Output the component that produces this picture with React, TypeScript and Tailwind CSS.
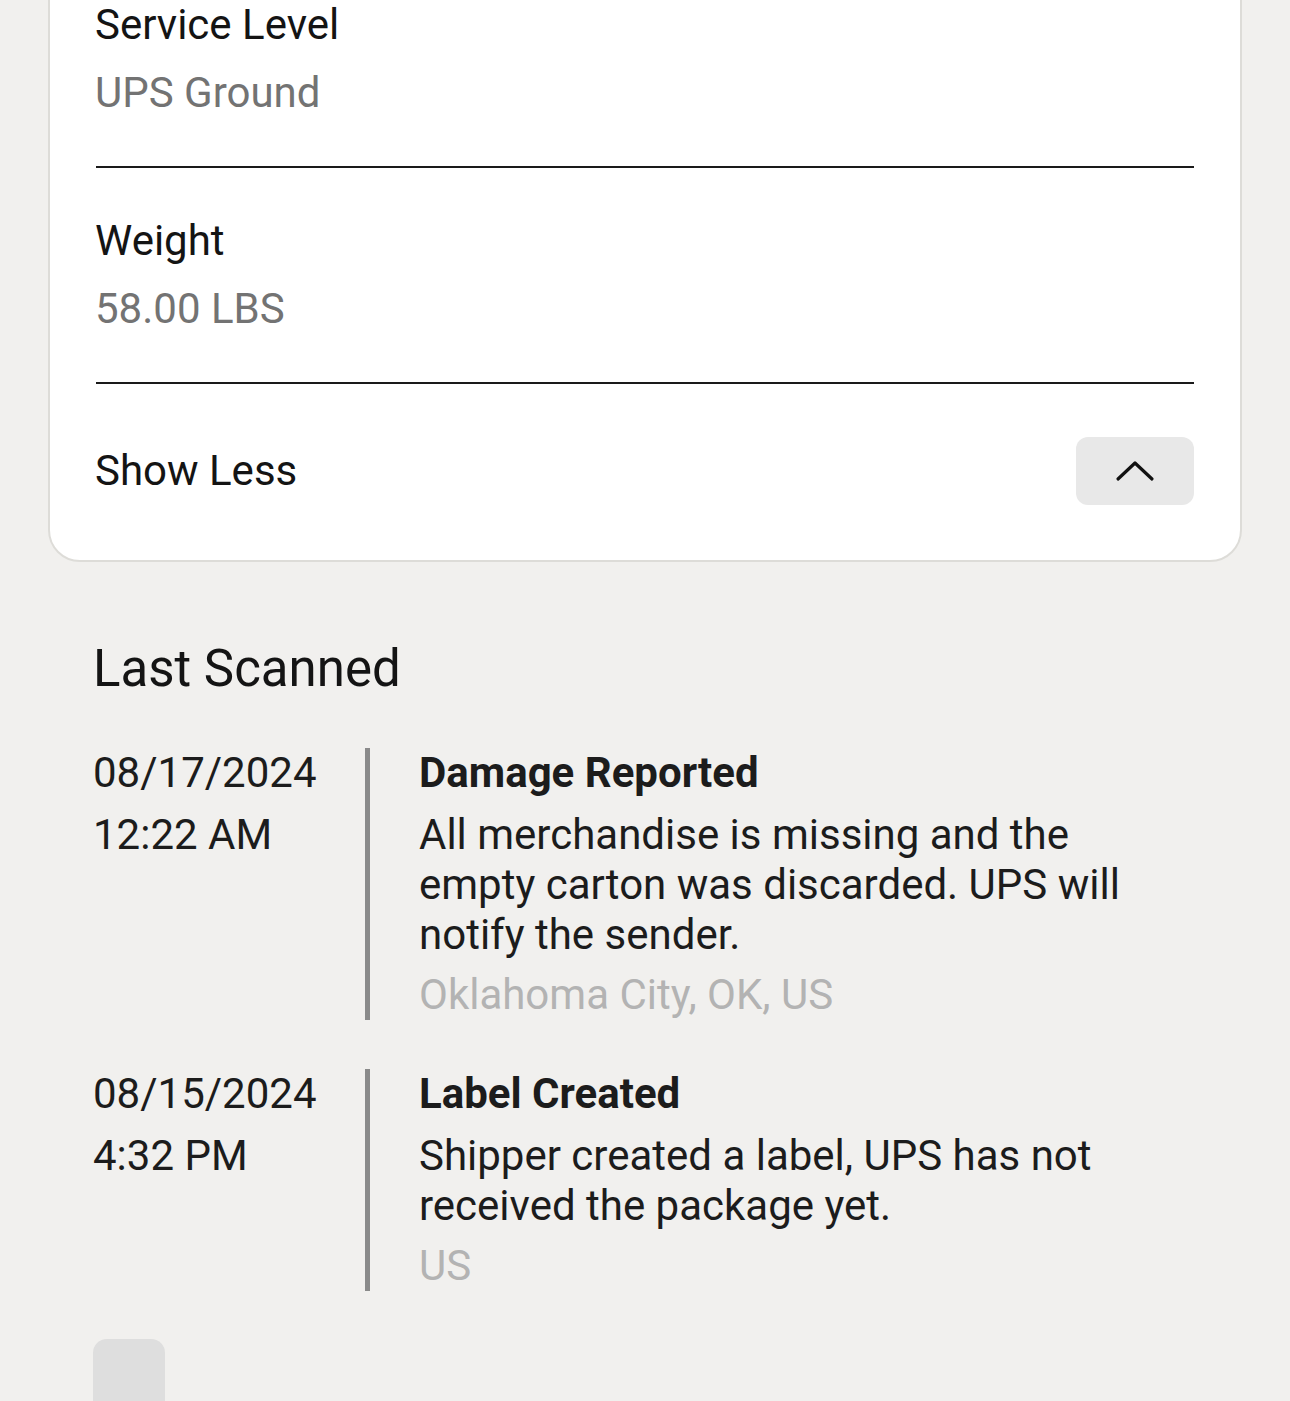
import React from "react";

const font = { fontFamily: "Roboto, 'Noto Sans', sans-serif" };

function Row({ label, value }: { label: string; value: string }) {
  return (
    <div className="py-[48px] border-b-2 border-[#1a1a1a]">
      <div className="-ml-[1px] text-[42px] leading-[50px] text-[#141414]">{label}</div>
      <div className="-ml-[1px] mt-[18px] text-[42px] leading-[50px] text-[#737373]">{value}</div>
    </div>
  );
}

function Entry({
  date,
  time,
  title,
  body,
  loc,
}: {
  date: string;
  time: string;
  title: string;
  body: string;
  loc: string;
}) {
  return (
    <div className="flex">
      <div className="w-[272px] shrink-0 text-[42px] leading-[50px] text-[#1c1c1c]">
        <div>{date}</div>
        <div className="mt-[12px]">{time}</div>
      </div>
      <div className="w-[5px] shrink-0 bg-[#8a8a8a]" />
      <div className="pl-[49px] w-[820px] pr-[40px]">
        <div className="text-[42px] leading-[50px] font-bold text-[#1c1c1c]">{title}</div>
        <div className="mt-[12px] text-[42px] leading-[50px] text-[#1c1c1c]">{body}</div>
        <div className="mt-[10px] text-[42px] leading-[50px] text-[#b3b3b3]">{loc}</div>
      </div>
    </div>
  );
}

export default function App() {
  return (
    <div style={font} className="min-h-[1401px] bg-[#f1f0ee] overflow-hidden">
      <div className="mx-[48px] -mt-[52px] bg-white border-2 border-[#dddcd8] rounded-b-[32px] px-[46px]">
        <div className="pt-[2px]">
          <Row label="Service Level" value="UPS Ground" />
        </div>
        <Row label="Weight" value="58.00 LBS" />
        <div className="flex items-center justify-between pt-[53px] pb-[55px]">
          <span className="-ml-[1px] text-[42px] leading-[50px] text-[#141414]">Show Less</span>
          <button className="w-[118px] h-[68px] rounded-[12px] bg-[#e8e8e8] flex items-center justify-center">
            <svg width="40" height="24" viewBox="0 0 40 24" fill="none">
              <path d="M3 20 L20 4 L37 20" stroke="#111" strokeWidth="3.2" strokeLinecap="round" strokeLinejoin="round" />
            </svg>
          </button>
        </div>
      </div>

      <div className="pl-[93px] pt-[77px]">
        <h2 className="text-[51px] leading-[60px] text-[#141414]">Last Scanned</h2>
        <div className="mt-[49px] flex flex-col gap-[49px]">
          <Entry
            date="08/17/2024"
            time="12:22 AM"
            title="Damage Reported"
            body="All merchandise is missing and the empty carton was discarded. UPS will notify the sender."
            loc="Oklahoma City, OK, US"
          />
          <Entry
            date="08/15/2024"
            time="4:32 PM"
            title="Label Created"
            body="Shipper created a label, UPS has not received the package yet."
            loc="US"
          />
        </div>
        <div className="mt-[48px] w-[72px] h-[90px] rounded-[14px] bg-[#dedede]" />
      </div>
    </div>
  );
}
